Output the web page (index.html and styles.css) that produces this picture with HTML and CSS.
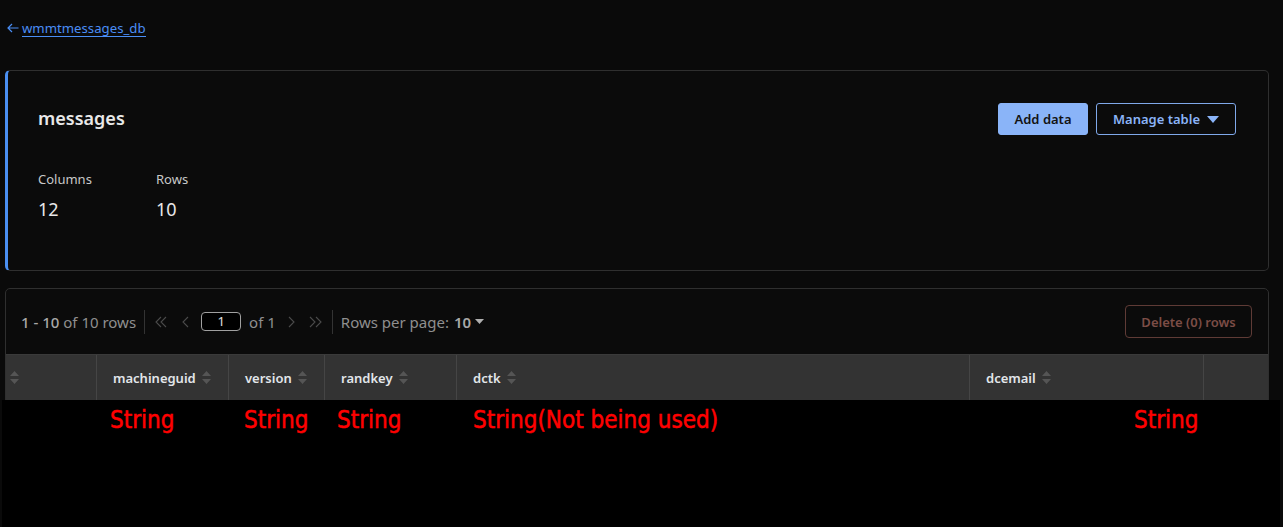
FILE: index.html
```html
<!DOCTYPE html>
<html lang="en">
<head>
<meta charset="utf-8">
<title>messages</title>
<link rel="stylesheet" href="styles.css">
</head>
<body>
<div class="page">
  <a class="back" href="#">
    <svg class="back-arrow" width="12" height="10" viewBox="0 0 12 10"><path d="M11.5 5H1.2M5 1 1 5l4 4" fill="none" stroke="#4a8ef5" stroke-width="1.2"/></svg>
    <span class="back-text">wmmtmessages_db</span>
  </a>

  <section class="card info">
    <div class="info-head">
      <h1 class="title">messages</h1>
      <div class="actions">
        <button class="btn primary">Add data</button>
        <button class="btn outline">Manage table
          <svg width="12" height="7" viewBox="0 0 12 7"><path d="M0 0h12L6 7z" fill="#8ab4f8"/></svg>
        </button>
      </div>
    </div>
    <div class="stats">
      <div class="stat"><div class="stat-label">Columns</div><div class="stat-value">12</div></div>
      <div class="stat"><div class="stat-label">Rows</div><div class="stat-value">10</div></div>
    </div>
  </section>

  <section class="card data">
    <div class="toolbar">
      <div class="pager">
        <span class="range"><b>1 - 10</b> of 10 rows</span>
        <span class="sep s1"></span>
        <svg class="chev c1" width="12" height="12" viewBox="0 0 12 12"><path d="M6 1 1 6l5 5M11 1 6 6l5 5" fill="none" stroke="#4a4a4a" stroke-width="1.1"/></svg>
        <svg class="chev c2" width="7" height="12" viewBox="0 0 7 12"><path d="M6 1 1 6l5 5" fill="none" stroke="#4a4a4a" stroke-width="1.1"/></svg>
        <span class="page-input">1</span>
        <span class="of">of 1</span>
        <svg class="chev c3" width="7" height="12" viewBox="0 0 7 12"><path d="M1 1l5 5-5 5" fill="none" stroke="#4a4a4a" stroke-width="1.1"/></svg>
        <svg class="chev c4" width="13" height="12" viewBox="0 0 13 12"><path d="M1 1l5 5-5 5M7 1l5 5-5 5" fill="none" stroke="#4a4a4a" stroke-width="1.1"/></svg>
        <span class="sep s2"></span>
        <span class="rpp">Rows per page: <b>10</b>
          <svg width="9" height="5" viewBox="0 0 9 5"><path d="M0 0h9L4.5 5z" fill="#b0b0b0"/></svg>
        </span>
      </div>
      <button class="btn danger">Delete (0) rows</button>
    </div>
    <div class="thead">
      <div class="th first"><svg class="sort" width="9" height="13" viewBox="0 0 9 13"><path d="M4.5 0 9 5H0zM0 8h9l-4.5 5z" fill="#555"/></svg></div>
      <div class="th">machineguid<svg class="sort" width="9" height="13" viewBox="0 0 9 13"><path d="M4.5 0 9 5H0zM0 8h9l-4.5 5z" fill="#555"/></svg></div>
      <div class="th">version<svg class="sort" width="9" height="13" viewBox="0 0 9 13"><path d="M4.5 0 9 5H0zM0 8h9l-4.5 5z" fill="#555"/></svg></div>
      <div class="th">randkey<svg class="sort" width="9" height="13" viewBox="0 0 9 13"><path d="M4.5 0 9 5H0zM0 8h9l-4.5 5z" fill="#555"/></svg></div>
      <div class="th">dctk<svg class="sort" width="9" height="13" viewBox="0 0 9 13"><path d="M4.5 0 9 5H0zM0 8h9l-4.5 5z" fill="#555"/></svg></div>
      <div class="th">dcemail<svg class="sort" width="9" height="13" viewBox="0 0 9 13"><path d="M4.5 0 9 5H0zM0 8h9l-4.5 5z" fill="#555"/></svg></div>
      <div class="th last"></div>
    </div>
  </section>

  <div class="note">
    <span class="n n1"></span>
    <span class="n n2">String</span>
    <span class="n n3">String</span>
    <span class="n n4">String</span>
    <span class="n n5">String(Not being used)</span>
    <span class="n n6">String</span>
    <span class="n n7"></span>
  </div>
</div>
</body>
</html>
```

FILE: styles.css
```css
* { box-sizing: border-box; }
html, body { margin: 0; padding: 0; }
body {
  width: 1283px;
  height: 527px;
  overflow: hidden;
  background: #0a0a0a;
  font-family: "Noto Sans", "Open Sans", sans-serif;
  color: #e6e6e6;
}
.page {
  position: relative;
  height: 527px;
  padding: 18px 14px 0 5px;
}
.back {
  display: flex;
  width: max-content;
  align-items: center;
  gap: 3px;
  height: 20px;
  margin-left: 2px;
  color: #4a8ef5;
  text-decoration: none;
  font-size: 13.2px;
}
.back-text {
  border-bottom: 1px solid #4a8ef5;
  line-height: 16px;
}
.card {
  border: 1px solid #2f2f2f;
  border-radius: 5px;
  background: #0b0b0b;
}
.info {
  margin-top: 32px;
  height: 201px;
  border-left: 3px solid #4a8ff2;
  padding: 32px 32px 0 30px;
}
.info-head {
  display: flex;
  justify-content: space-between;
  align-items: center;
  height: 32px;
}
.title {
  margin: 0 0 2px;
  font-size: 18px;
  font-weight: 600;
  color: #e8e8e8;
  line-height: 24px;
}
.actions { display: flex; gap: 8px; }
.btn {
  font-family: inherit;
  font-size: 13px;
  font-weight: 600;
  height: 32px;
  border-radius: 3px;
  padding: 0 15px;
  display: inline-flex;
  align-items: center;
  gap: 7px;
  cursor: pointer;
}
.primary {
  background: #8ab4f8;
  color: #121212;
  border: 1px solid #8ab4f8;
  width: 90px;
  justify-content: center;
}
.outline {
  background: transparent;
  color: #8ab4f8;
  border: 1px solid #7fa8ea;
  width: 140px;
  justify-content: center;
}
.stats {
  display: flex;
  margin-top: 35px;
}
.stat { width: 118px; }
.stat-label {
  font-size: 13px;
  line-height: 18px;
  color: #c8c8c8;
}
.stat-value {
  margin-top: 9px;
  font-size: 18px;
  line-height: 24px;
  color: #e8e8e8;
}
.data {
  margin-top: 17px;
  height: 260px;
  overflow: hidden;
}
.toolbar {
  height: 65px;
  display: flex;
  align-items: center;
  justify-content: space-between;
  padding: 0 16px 0 15px;
}
.pager {
  display: flex;
  align-items: center;
  font-size: 15px;
  color: #8f8f8f;
}
.range b { font-weight: 500; color: #a8a8a8; }
.sep {
  width: 1px;
  height: 24px;
  background: #333;
}
.s1 { margin: 0 10px 0 8px; }
.s2 { margin: 0 8px 0 10px; }
.c1 { margin-right: 15px; }
.c2 { margin-right: 12px; }
.c3 { margin-right: 14px; }
.page-input {
  width: 40px;
  height: 19px;
  border: 1px solid #a0a0a0;
  border-radius: 4px;
  background: #000;
  color: #e0e0e0;
  font-size: 13px;
  line-height: 17px;
  text-align: center;
  margin-right: 8px;
}
.of { margin-right: 12px; color: #8f8f8f; }
.rpp { display: inline-flex; align-items: center; gap: 4px; }
.rpp b { font-weight: 600; color: #a8a8a8; margin-left: 1px; }
.danger {
  background: transparent;
  border: 1px solid #5f3b36;
  color: #7c4d46;
  width: 127px;
  height: 33px;
  justify-content: center;
  border-radius: 4px;
}
.thead {
  display: grid;
  grid-template-columns: 90px 132px 96px 132px 513px 234px 1fr;
  height: 47px;
  background: #333333;
  border-top: 1px solid #3a3a3a;
  border-bottom: 1px solid #444;
}
.th {
  display: flex;
  align-items: center;
  gap: 6px;
  padding-left: 16px;
  font-size: 13px;
  font-weight: 600;
  color: #e2e6ea;
  border-left: 1px solid #454545;
}
.th.first { border-left: none; padding-left: 4px; }
.sort { flex: none; }
.note {
  position: absolute;
  left: 2px;
  top: 400px;
  width: 1278px;
  height: 127px;
  background: #000;
  display: grid;
  grid-template-columns: 93px 132px 96px 132px 513px 234px 1fr;
  align-content: start;
  padding-top: 3px;
}
.n {
  font-family: "DejaVu Sans", sans-serif;
  font-stretch: condensed;
  font-size: 24px;
  font-weight: 400;
  line-height: 34px;
  color: #ff0000;
  white-space: nowrap;
  -webkit-text-stroke: 0.5px #ff0000;
}
.n2 { padding-left: 15px; }
.n3 { padding-left: 17px; }
.n4 { padding-left: 14px; }
.n5 { padding-left: 18px; }
.n6 { padding-left: 166px; }
```
